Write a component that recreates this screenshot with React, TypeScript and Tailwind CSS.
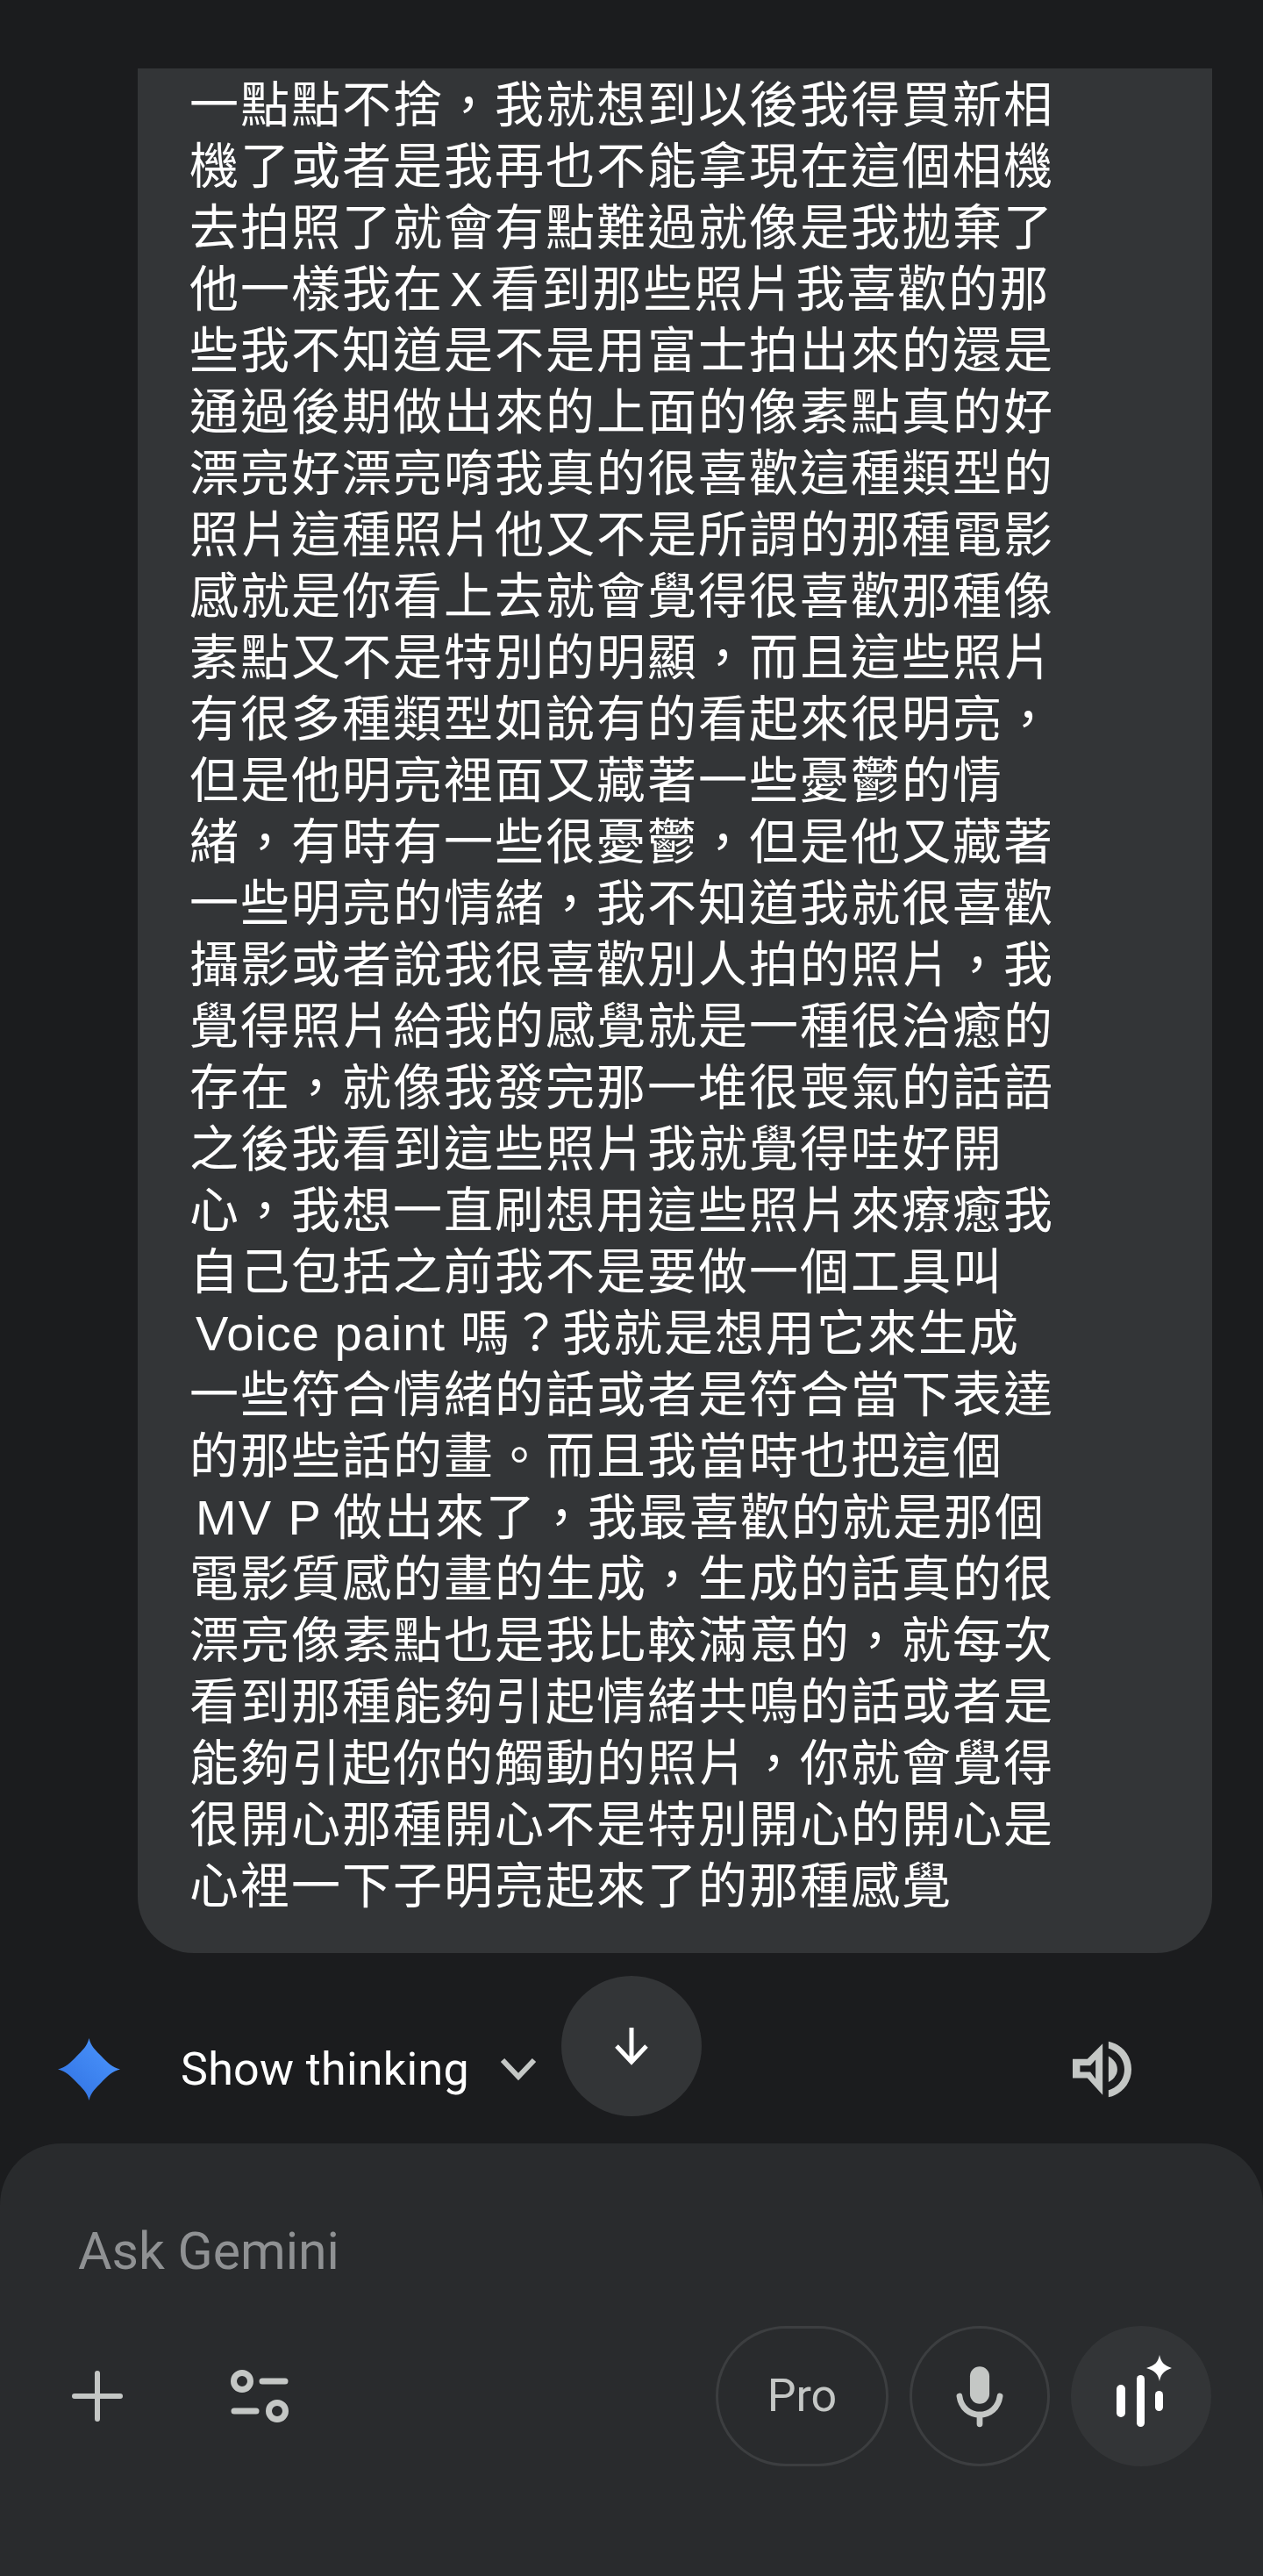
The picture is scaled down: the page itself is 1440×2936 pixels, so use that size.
import type { ReactNode } from "react";

const C = "\uFF0C";
const Q = "\uFF1F";

const LINES: ReactNode[] = [
  `一點點不捨${C}我就想到以後我得買新相`,
  "機了或者是我再也不能拿現在這個相機",
  "去拍照了就會有點難過就像是我拋棄了",
  <>
    他一樣我在<span className="mx-[7px]">X</span>看到那些照片我喜歡的那
  </>,
  "些我不知道是不是用富士拍出來的還是",
  "通過後期做出來的上面的像素點真的好",
  "漂亮好漂亮唷我真的很喜歡這種類型的",
  "照片這種照片他又不是所謂的那種電影",
  "感就是你看上去就會覺得很喜歡那種像",
  `素點又不是特別的明顯${C}而且這些照片`,
  `有很多種類型如說有的看起來很明亮${C}`,
  "但是他明亮裡面又藏著一些憂鬱的情",
  `緒${C}有時有一些很憂鬱${C}但是他又藏著`,
  `一些明亮的情緒${C}我不知道我就很喜歡`,
  `攝影或者說我很喜歡別人拍的照片${C}我`,
  "覺得照片給我的感覺就是一種很治癒的",
  `存在${C}就像我發完那一堆很喪氣的話語`,
  "之後我看到這些照片我就覺得哇好開",
  `心${C}我想一直刷想用這些照片來療癒我`,
  "自己包括之前我不是要做一個工具叫",
  <>
    <span className="ml-[7px] mr-[17px] tracking-[1px]">Voice paint</span>
    {`嗎${Q}我就是想用它來生成`}
  </>,
  "一些符合情緒的話或者是符合當下表達",
  "的那些話的畫。而且我當時也把這個",
  <>
    <span className="ml-[7px] mr-[12px]">MV P</span>
    {`做出來了${C}我最喜歡的就是那個`}
  </>,
  `電影質感的畫的生成${C}生成的話真的很`,
  `漂亮像素點也是我比較滿意的${C}就每次`,
  "看到那種能夠引起情緒共鳴的話或者是",
  `能夠引起你的觸動的照片${C}你就會覺得`,
  "很開心那種開心不是特別開心的開心是",
  "心裡一下子明亮起來了的那種感覺",
];

function GeminiStar() {
  return (
    <svg width="71" height="71" viewBox="0 0 71 71" className="shrink-0">
      <defs>
        <linearGradient id="gem" x1="0" y1="1" x2="1" y2="0">
          <stop offset="0" stopColor="#2f6fe0" />
          <stop offset="1" stopColor="#4d98ff" />
        </linearGradient>
      </defs>
      <path
        d="M35.5 0 C37.5 9 43.5 14.5 50 21 C56.5 27.5 62 33.5 71 35.5 C62 37.5 56.5 43.5 50 50 C43.5 56.5 37.5 62 35.5 71 C33.5 62 27.5 56.5 21 50 C14.5 43.5 9 37.5 0 35.5 C9 33.5 14.5 27.5 21 21 C27.5 14.5 33.5 9 35.5 0 Z"
        fill="url(#gem)"
      />
    </svg>
  );
}

function Speaker() {
  return (
    <svg width="67" height="65" viewBox="130 78 200 194" fill="#c4c7c5">
      <path
        fillRule="evenodd"
        d="M130 140 H180 L232 88 V262 L180 205 H130 Z M155 162 V184 H190 L208 208 V142 L190 162 Z"
      />
      <path d="M252 130 C272 142 282 158 282 175 C282 192 272 208 252 218 Z" />
      <path d="M252 80 C298 90 330 128 330 175 C330 222 298 260 252 270 V246 C285 236 306 208 306 175 C306 142 285 114 252 104 Z" />
    </svg>
  );
}

function Plus() {
  return (
    <svg width="58" height="58" viewBox="0 0 58 58" stroke="#c4c7c5" strokeWidth="6" strokeLinecap="round">
      <path d="M3 29 H55 M29 3 V55" />
    </svg>
  );
}

function Tune() {
  return (
    <svg width="66" height="60" viewBox="0 0 66 60" fill="none" stroke="#c4c7c5" strokeWidth="7" strokeLinecap="round">
      <circle cx="13" cy="13" r="9.5" />
      <path d="M36 13 H62" />
      <path d="M4 47 H29" />
      <circle cx="53" cy="47" r="9.5" />
    </svg>
  );
}

function Mic() {
  return (
    <svg width="160" height="160" viewBox="0 0 160 160" fill="none">
      <rect x="68.5" y="45" width="23" height="44" rx="11.5" fill="#c4c7c5" />
      <path d="M56 80 C58 94 68 102 80 102 C92 102 102 94 104 80" stroke="#c4c7c5" strokeWidth="7" strokeLinecap="round" />
      <path d="M80 102 V113" stroke="#c4c7c5" strokeWidth="7" strokeLinecap="round" />
    </svg>
  );
}

function VoiceSpark() {
  return (
    <svg width="160" height="160" viewBox="0 0 160 160" fill="#ffffff">
      <rect x="52" y="67" width="10" height="37" rx="5" />
      <rect x="75" y="56" width="9" height="59" rx="4.5" />
      <rect x="96" y="74" width="9" height="23" rx="4.5" />
      <path d="M101 33 C102.5 41 106 45 115 48 C106 51 102.5 55 101 63 C99.5 55 96 51 86 48 C96 45 99.5 41 101 33 Z" />
    </svg>
  );
}

export default function App() {
  return (
    <div
      className="flex h-[2936px] w-[1440px] flex-col overflow-hidden bg-[#1b1c1e] pt-[78px]"
      style={{ fontFamily: '"Liberation Sans", "Noto Sans CJK TC", sans-serif' }}
    >
      <div className="ml-[157px] h-[2148px] w-[1225px] shrink-0 rounded-b-[64px] bg-[#333537] pl-[59px] pt-[7px]">
        {LINES.map((line, i) => (
          <div key={i} className="whitespace-pre text-[56px] leading-[70px] tracking-[2px] text-white">
            {line}
          </div>
        ))}
      </div>

      <div className="relative flex h-[217px] shrink-0 items-center pl-[66px] pt-[47px]">
        <GeminiStar />
        <span className="ml-[69px] pt-[2px] font-['Roboto',sans-serif] text-[52px] leading-[60px] tracking-[0.3px] text-white">Show thinking</span>
        <svg width="42" height="27" viewBox="0 0 42 27" className="ml-[35px]" fill="none" stroke="#c4c7c5" strokeWidth="6">
          <path d="M3 3 L21 22 L39 3" />
        </svg>
        <div className="ml-auto mr-[150px]">
          <Speaker />
        </div>
        <div className="absolute left-[640px] top-[26px] flex h-[160px] w-[160px] items-center justify-center rounded-full bg-[#333537]">
          <svg width="40" height="44" viewBox="0 0 40 44" fill="none" stroke="#ffffff" strokeWidth="5">
            <path d="M20 1 V40 M3 22 L20 40 L37 22" />
          </svg>
        </div>
      </div>

      <div className="flex flex-1 flex-col rounded-t-[70px] bg-[#292b2d]">
        <div className="pl-[89px] pt-[88px] font-['Roboto',sans-serif] text-[59px] leading-[70px] text-[#8f9193]">Ask Gemini</div>
        <div className="mt-[50px] flex items-center pl-[82px] pr-[59px]">
          <Plus />
          <div className="ml-[123px]">
            <Tune />
          </div>
          <div className="ml-auto flex items-center gap-[24px]">
            <div className="flex h-[160px] w-[197px] items-center justify-center rounded-full border-[3px] border-[#3c3e40] font-['Roboto',sans-serif] text-[52px] text-[#c4c7c5]">
              Pro
            </div>
            <div className="flex h-[160px] w-[160px] items-center justify-center rounded-full border-[3px] border-[#3c3e40]">
              <Mic />
            </div>
            <div className="flex h-[160px] w-[160px] items-center justify-center rounded-full bg-[#333537]">
              <VoiceSpark />
            </div>
          </div>
        </div>
      </div>
    </div>
  );
}
